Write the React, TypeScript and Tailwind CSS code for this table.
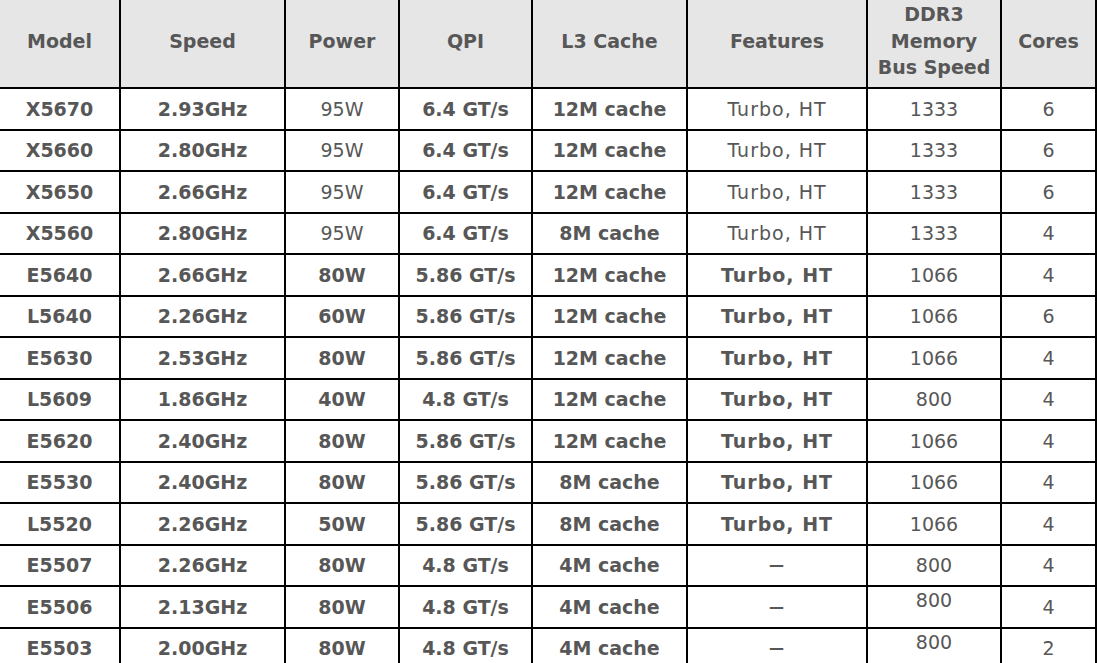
import React from 'react';

type Row = {
  model: string;
  speed: string;
  power: string;
  qpi: string;
  cache: string;
  features: string;
  bus: string;
  cores: string;
  legacy?: boolean;
  busTop?: boolean;
};

const rows: Row[] = [
  { model: 'X5670', speed: '2.93GHz', power: '95W', qpi: '6.4 GT/s', cache: '12M cache', features: 'Turbo, HT', bus: '1333', cores: '6', legacy: true },
  { model: 'X5660', speed: '2.80GHz', power: '95W', qpi: '6.4 GT/s', cache: '12M cache', features: 'Turbo, HT', bus: '1333', cores: '6', legacy: true },
  { model: 'X5650', speed: '2.66GHz', power: '95W', qpi: '6.4 GT/s', cache: '12M cache', features: 'Turbo, HT', bus: '1333', cores: '6', legacy: true },
  { model: 'X5560', speed: '2.80GHz', power: '95W', qpi: '6.4 GT/s', cache: '8M cache', features: 'Turbo, HT', bus: '1333', cores: '4', legacy: true },
  { model: 'E5640', speed: '2.66GHz', power: '80W', qpi: '5.86 GT/s', cache: '12M cache', features: 'Turbo, HT', bus: '1066', cores: '4' },
  { model: 'L5640', speed: '2.26GHz', power: '60W', qpi: '5.86 GT/s', cache: '12M cache', features: 'Turbo, HT', bus: '1066', cores: '6' },
  { model: 'E5630', speed: '2.53GHz', power: '80W', qpi: '5.86 GT/s', cache: '12M cache', features: 'Turbo, HT', bus: '1066', cores: '4' },
  { model: 'L5609', speed: '1.86GHz', power: '40W', qpi: '4.8 GT/s', cache: '12M cache', features: 'Turbo, HT', bus: '800', cores: '4' },
  { model: 'E5620', speed: '2.40GHz', power: '80W', qpi: '5.86 GT/s', cache: '12M cache', features: 'Turbo, HT', bus: '1066', cores: '4' },
  { model: 'E5530', speed: '2.40GHz', power: '80W', qpi: '5.86 GT/s', cache: '8M cache', features: 'Turbo, HT', bus: '1066', cores: '4' },
  { model: 'L5520', speed: '2.26GHz', power: '50W', qpi: '5.86 GT/s', cache: '8M cache', features: 'Turbo, HT', bus: '1066', cores: '4' },
  { model: 'E5507', speed: '2.26GHz', power: '80W', qpi: '4.8 GT/s', cache: '4M cache', features: '', bus: '800', cores: '4' },
  { model: 'E5506', speed: '2.13GHz', power: '80W', qpi: '4.8 GT/s', cache: '4M cache', features: '', bus: '800', cores: '4', busTop: true },
  { model: 'E5503', speed: '2.00GHz', power: '80W', qpi: '4.8 GT/s', cache: '4M cache', features: '', bus: '800', cores: '2', busTop: true },
];

// widths include the 2px right rule
const cell = 'flex shrink-0 items-center justify-center border-r-2 border-black';

const Cell = ({ w, bold, top, className, children }: { w: string; bold?: boolean; top?: boolean; className?: string; children: React.ReactNode }) => (
  <div className={`${cell} ${w} ${bold ? 'font-bold' : 'font-normal'} ${top ? 'items-start pt-[1px]' : ''} ${className ?? ''}`}>
    {children}
  </div>
);

export default function App() {
  return (
    <div
      className="h-[663px] w-[1097px] overflow-hidden bg-white text-[19px] text-[#575757]"
      style={{ fontFamily: '"DejaVu Sans", Verdana, sans-serif' }}
    >
      <div className="flex h-[89px] border-b-2 border-black bg-[#e6e6e6] text-[19px] font-bold leading-[26.5px]">
        <Cell w="w-[121px]" bold className="pb-[5px]">Model</Cell>
        <Cell w="w-[165px]" bold className="pb-[5px]">Speed</Cell>
        <Cell w="w-[114px]" bold className="pb-[5px]">Power</Cell>
        <Cell w="w-[133px]" bold className="pb-[5px]">QPI</Cell>
        <Cell w="w-[155px]" bold className="pb-[5px]">L3 Cache</Cell>
        <Cell w="w-[180px]" bold className="pb-[5px]">Features</Cell>
        <Cell w="w-[134px]" bold className="pb-[5px] text-center">
          <span>
            DDR3
            <br />
            Memory
            <br />
            Bus Speed
          </span>
        </Cell>
        <Cell w="w-[95px]" bold className="border-r-0 pb-[5px]">Cores</Cell>
      </div>
      {rows.map((r) => (
        <div key={r.model} className="flex h-[41.5px] border-b-2 border-black leading-[24px]">
          <Cell w="w-[121px]" bold>{r.model}</Cell>
          <Cell w="w-[165px]" bold>{r.speed}</Cell>
          <Cell w="w-[114px]" bold={!r.legacy}>{r.power}</Cell>
          <Cell w="w-[133px]" bold>{r.qpi}</Cell>
          <Cell w="w-[155px]" bold>{r.cache}</Cell>
          <Cell w="w-[180px]" bold={!r.legacy && !!r.features} className="tracking-[1px]">
            {r.features || <span className="text-[15px] font-bold">—</span>}
          </Cell>
          <Cell w="w-[134px]" top={r.busTop}>{r.bus}</Cell>
          <Cell w="w-[95px]" className="border-r-0">{r.cores}</Cell>
        </div>
      ))}
    </div>
  );
}
